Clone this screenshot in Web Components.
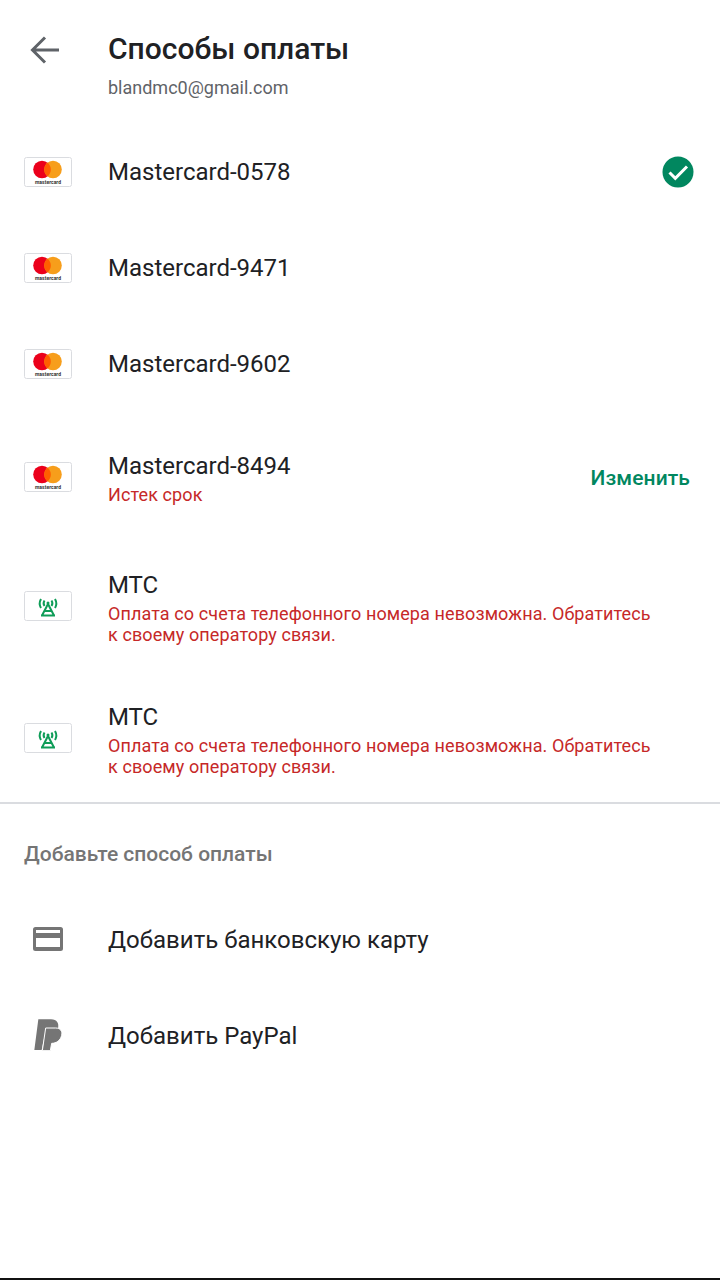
<!DOCTYPE html>
<html lang="ru">
<head>
<meta charset="utf-8">
<title>Способы оплаты</title>
<style>
html, body {
  margin: 0;
  height: 100%;
  background: #fff;
}
body {
  font-family: Roboto, 'Noto Sans', sans-serif;
  color: #202124;
}
</style>
</head>
<body>
<template id="page-tpl">
  <style>
    :host { display: flex; flex-flow: column; width: 720px; height: 1280px; box-sizing: border-box; border-bottom: 2px solid #111; overflow: hidden; }
  </style>
  <slot></slot>
</template>

<template id="header-tpl">
  <style>
    :host { display: grid; grid-template-columns: 108px 1fr; height: 124px; box-sizing: border-box; }
    .back { padding: 33px 0 0 28px; }
    svg { display: block; }
    h1 { margin: 0; padding-top: 31px; font: 500 30px/36px Roboto, sans-serif; color: #202124; }
    p { margin: 0; padding-top: 9px; font: 400 18px/24px Roboto, sans-serif; color: #5f6368; }
  </style>
  <div class="back">
    <svg width="34" height="34" viewBox="0 0 34 34" fill="none" stroke="#5f6368" stroke-width="3">
      <path d="M31 17H5M17 4.500 4.500 17 17 29.500"/>
    </svg>
  </div>
  <div>
    <h1><slot name="title"></slot></h1>
    <p><slot name="account"></slot></p>
  </div>
</template>

<template id="row-tpl">
  <style>
    :host { display: grid; grid-template-columns: 108px 1fr auto; align-items: center; box-sizing: border-box; height: var(--row-h, 96px); padding-right: 26px; }
    .main { display: flex; flex-flow: column; }
    .main.has-sub { padding-top: 2px; }
    .name { font: 400 24px/32px Roboto, sans-serif; color: #202124; }
    .sub { margin-top: 2px; font: 400 18px/21px Roboto, sans-serif; letter-spacing: .1px; color: #c62828; padding-right: 30px; }
    .main:not(.has-sub) .sub { display: none; }
    .icon { padding-left: 24px; display: flex; }
  </style>
  <div class="icon"><slot name="icon"></slot></div>
  <div class="main">
    <div class="name"><slot></slot></div>
    <div class="sub"><slot name="sub"></slot></div>
  </div>
  <slot name="end"></slot>
</template>

<pay-page>
  <pay-header>
    <span slot="title">Способы оплаты</span>
    <span slot="account">blandmc0@gmail.com</span>
  </pay-header>

  <pay-row>
    <card-badge slot="icon" kind="mc"></card-badge>
    Mastercard-0578
    <svg slot="end" width="32" height="32" viewBox="0 0 32 32" style="display:block">
      <circle cx="16" cy="16" r="15.500" fill="#01875f"/>
      <path d="M7.500 16.500l5.800 5.800L25 10.500" fill="none" stroke="#fff" stroke-width="3"/>
    </svg>
  </pay-row>
  <pay-row>
    <card-badge slot="icon" kind="mc"></card-badge>
    Mastercard-9471
  </pay-row>
  <pay-row>
    <card-badge slot="icon" kind="mc"></card-badge>
    Mastercard-9602
  </pay-row>
  <pay-row style="--row-h:128px">
    <card-badge slot="icon" kind="mc" style="margin-top:2px"></card-badge>
    Mastercard-8494
    <span slot="sub">Истек срок</span>
    <span slot="end" style="font:500 21px/28px Roboto,sans-serif;letter-spacing:.1px;color:#01875f;margin:4px 4px 0 0">Изменить</span>
  </pay-row>
  <pay-row style="--row-h:132px">
    <card-badge slot="icon" kind="mts"></card-badge>
    МТС
    <span slot="sub">Оплата со счета телефонного номера невозможна. Обратитесь к своему оператору связи.</span>
  </pay-row>
  <pay-row style="--row-h:130px;padding-top:2px">
    <card-badge slot="icon" kind="mts"></card-badge>
    МТС
    <span slot="sub">Оплата со счета телефонного номера невозможна. Обратитесь к своему оператору связи.</span>
  </pay-row>

  <section-title>Добавьте способ оплаты</section-title>

  <pay-row>
    <svg slot="icon" width="48" height="32" viewBox="0 0 48 32" style="display:block">
      <path fill="#757575" fill-rule="evenodd" d="M11.500 3h25A2.500 2.500 0 0 1 39 5.500v19a2.500 2.500 0 0 1-2.500 2.500h-25A2.500 2.500 0 0 1 9 24.500v-19A2.500 2.500 0 0 1 11.500 3zM12 6v3h24V6zm0 8v9h24v-9z"/>
    </svg>
    Добавить банковскую карту
  </pay-row>
  <pay-row>
    <svg slot="icon" width="48" height="36" viewBox="-3 24 144 108" style="display:block">
      <path fill="#757575" d="M40 28H78C96 28 103 40 99 56C95 76 80 86 62 86H57L50 120H28Z"/>
      <path fill="#757575" stroke="#fff" stroke-width="3" d="M62 54H92C106 54 113 64 110 76C106 92 94 100 80 100L76 122H52Z"/>
    </svg>
    Добавить PayPal
  </pay-row>
</pay-page>

<script>
function stamp(el, id) {
  const root = el.attachShadow({mode: 'open'});
  root.appendChild(document.getElementById(id).content.cloneNode(true));
  return root;
}

class PayPage extends HTMLElement {
  constructor() {
    super();
    stamp(this, 'page-tpl');
  }
}

class PayHeader extends HTMLElement {
  constructor() {
    super();
    stamp(this, 'header-tpl');
  }
}

class PayRow extends HTMLElement {
  constructor() {
    super();
    this._root = stamp(this, 'row-tpl');
  }

  connectedCallback() {
    if (this.querySelector('[slot=sub]')) {
      this._root.querySelector('.main').classList.add('has-sub');
    }
  }
}

class CardBadge extends HTMLElement {
  constructor() {
    super();
    const kind = this.getAttribute('kind');
    this._root = this.attachShadow({mode: 'open'});
    const mc = `
      <circle cx="18" cy="12.500" r="8.800" fill="#eb001b"/>
      <circle cx="29" cy="12.500" r="8.800" fill="#f79e1b"/>
      <path d="M23.500 5.600a8.800 8.800 0 0 1 0 13.800a8.800 8.800 0 0 1 0-13.800z" fill="#ff5f00"/>
      <text x="24" y="26.500" text-anchor="middle" textLength="26" font-family="Roboto, sans-serif" font-weight="700" font-size="5" fill="#333">mastercard</text>`;
    const mts = `
      <g fill="none" stroke="#0f9d58" stroke-width="2">
        <path d="M24 13 18 24.500M24 13l6 11.500M17 24.500h14M20.500 20h7"/>
        <path d="M17 8a9 9 0 0 0 0 9M31 8a9 9 0 0 1 0 9"/>
        <path d="M20.500 9.500a5 5 0 0 0 0 5.500M27.500 9.500a5 5 0 0 1 0 5.500"/>
      </g>
      <circle cx="24" cy="12" r="1.500" fill="#0f9d58"/>`;
    this._root.innerHTML = `
<style>
:host { display: block; width: 48px; height: 30px; }
svg { display: block; }
</style>
<svg width="48" height="30" viewBox="0 0 48 30">
  <rect x=".5" y=".5" width="47" height="29" rx="2" fill="#fff" stroke="#dadce0"/>
  ${kind === 'mts' ? mts : mc}
</svg>`;
  }
}

class SectionTitle extends HTMLElement {
  constructor() {
    super();
    this.attachShadow({mode: 'open'}).innerHTML = `
<style>
:host { display: block; box-sizing: border-box; height: 90px; padding: 36px 24px 0; border-top: 2px solid #dadce0; font: 500 21px/28px Roboto, sans-serif; color: #757575; }
</style>
<slot></slot>`;
  }
}

customElements.define('pay-page', PayPage);
customElements.define('pay-header', PayHeader);
customElements.define('pay-row', PayRow);
customElements.define('card-badge', CardBadge);
customElements.define('section-title', SectionTitle);
</script>
</body>
</html>
